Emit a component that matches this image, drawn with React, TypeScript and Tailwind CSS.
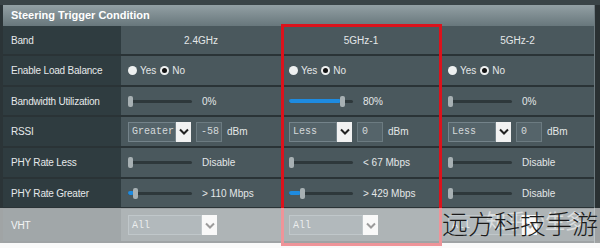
import React from 'react'

const font = "font-['Liberation_Sans',Arial,sans-serif]"
const mono = "font-['Liberation_Mono','Courier_New',monospace]"

function Radio({ on }: { on?: boolean }) {
  return (
    <span className="w-[9px] h-[9px] rounded-full bg-[#eef0f0] flex items-center justify-center">
      {on && <span className="w-[5px] h-[5px] rounded-full bg-[#111]" />}
    </span>
  )
}

function YesNo() {
  return (
    <div className="flex items-center text-[#e4e7e8]">
      <Radio />
      <span className="ml-[3px]">Yes</span>
      <span className="ml-[4px]">
        <Radio on />
      </span>
      <span className="ml-[3px]">No</span>
    </div>
  )
}

function Slider({ fill = 0, handle = 0, label }: { fill?: number; handle?: number; label: string }) {
  return (
    <div className="flex items-center">
      <div className="relative w-[64px] h-[11px] flex items-center">
        <div className="w-full h-[3px] bg-[#2e383b] rounded-full" />
        {fill > 0 && <div className="absolute left-0 h-[4px] bg-[#1e8be0] rounded-full" style={{ width: fill }} />}
        <div className="absolute w-[5px] h-[11px] rounded-[2px] bg-[#a7b0b3]" style={{ left: handle }} />
      </div>
      <span className="ml-[10px] text-[#e4e7e8]">{label}</span>
    </div>
  )
}

function Chevron() {
  return (
    <span className="w-[15px] h-[20px] bg-[#f2f2f2] flex items-center justify-center">
      <svg width="10" height="7" viewBox="0 0 10 7">
        <path d="M1 1.5 L5 5.5 L9 1.5" fill="none" stroke="#222" strokeWidth="2" />
      </svg>
    </span>
  )
}

function Select({ text, w = 48 }: { text: string; w?: number }) {
  return (
    <div className="flex items-center">
      <span
        className={`${mono} h-[20px] flex items-center pl-[3px] text-[10px] text-[#d4d9da] bg-[#55646a] border border-[#74838a]`}
        style={{ width: w }}
      >
        {text}
      </span>
      <Chevron />
    </div>
  )
}

function Rssi({ sel, val }: { sel: string; val: string }) {
  return (
    <div className="flex items-center">
      <Select text={sel} />
      <span className={`${mono} ml-[5px] w-[26px] h-[20px] flex items-center pl-[4px] text-[10px] text-[#d4d9da] bg-[#55646a] border border-[#6c7b81]`}>
        {val}
      </span>
      <span className="ml-[5px] text-[#e4e7e8]">dBm</span>
    </div>
  )
}

type Row = { label: string; h: string; cells: React.ReactNode[]; center?: boolean }

const rows: Row[] = [
  { label: 'Band', h: 'h-[30px]', center: true, cells: ['2.4GHz', '5GHz-1', '5GHz-2'] },
  { label: 'Enable Load Balance', h: 'h-[31px]', cells: [<YesNo />, <YesNo />, <YesNo />] },
  {
    label: 'Bandwidth Utilization',
    h: 'h-[30px]',
    cells: [<Slider label="0%" />, <Slider fill={52} handle={51} label="80%" />, <Slider label="0%" />],
  },
  {
    label: 'RSSI',
    h: 'h-[31px]',
    cells: [<Rssi sel="Greater" val="-58" />, <Rssi sel="Less" val="0" />, <Rssi sel="Less" val="0" />],
  },
  {
    label: 'PHY Rate Less',
    h: 'h-[31px]',
    cells: [<Slider label="Disable" />, <Slider label="< 67 Mbps" />, <Slider label="Disable" />],
  },
  {
    label: 'PHY Rate Greater',
    h: 'h-[30px]',
    cells: [
      <Slider fill={6} handle={5} label="> 110 Mbps" />,
      <Slider fill={12} handle={11} label="> 429 Mbps" />,
      <Slider label="Disable" />,
    ],
  },
  {
    label: 'VHT',
    h: 'h-[34px]',
    cells: [<Select text="All" w={74} />, <Select text="All" w={74} />, <Select text="All" w={74} />],
  },
]

const colW = ['w-[160px]', 'w-[160px]', 'w-[153px]']
const colPad = ['pl-[7px]', 'pl-[8px]', 'pl-[7px]']

export default function App() {
  return (
    <div className={`${font} relative w-[600px] h-[248px] overflow-hidden bg-[#f4f4f4] text-[10px]`}>
      <div className="h-[5px] bg-[#3a4447]" />
      <div className="flex">
        <div className="w-[594px] border-l-[3px] border-[#2b3437] bg-[#4a585d]">
          {/* header */}
          <div className="h-[21px] flex items-center pl-[8px] bg-gradient-to-b from-[#93a0a4] to-[#68777c]">
            <span className="text-[11px] font-bold text-white">Steering Trigger Condition</span>
          </div>

          {rows.map((r) => (
            <div key={r.label} className={`${r.h} flex border-b-2 border-[#2a3336]`}>
              <div className="w-[118px] bg-[#2f3c40] flex items-center pl-[8px] text-[#e6e9ea] tracking-[-0.2px]">
                {r.label}
              </div>
              {r.cells.map((c, i) => (
                <div
                  key={i}
                  className={`${colW[i]} flex items-center text-[#e4e7e8] ${r.center ? 'justify-center' : colPad[i]}`}
                >
                  {c}
                </div>
              ))}
            </div>
          ))}
        </div>
        <div className="w-[6px] border-l border-[#6e7b80] bg-[#2a3133]" />
      </div>

      {/* highlight box */}
      <div className="absolute left-[281px] top-[24px] w-[161px] h-[222px] border-[3px] border-[#dc121c]" />

      {/* watermark band */}
      <div className="absolute left-0 top-[208px] w-full h-[40px] bg-white/55" />
      <div className="absolute left-[486px] top-[206px] whitespace-nowrap text-[20px] leading-[30px] text-white/55 font-['Noto_Sans_CJK_SC',sans-serif]">
        知乎@生多
      </div>
      <div className="absolute left-[442px] top-[205px] whitespace-nowrap text-[26px] font-light text-[#1a1a1a] leading-[36px] font-['Noto_Sans_CJK_SC',sans-serif]">
        远方科技手游
      </div>
    </div>
  )
}
